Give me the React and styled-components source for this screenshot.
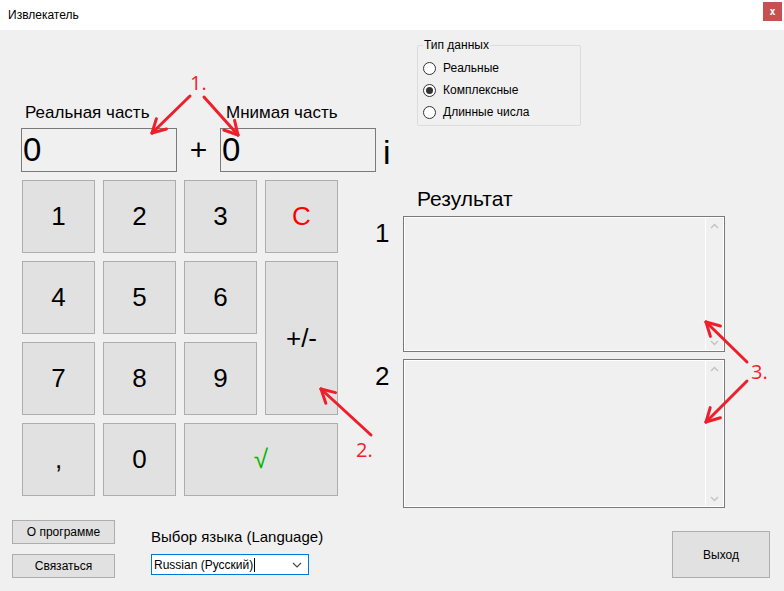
import React from "react";
import styled, { createGlobalStyle } from "styled-components";

const Global = createGlobalStyle`
  html, body { margin: 0; padding: 0; background: #f0f0f0; }
  * { box-sizing: border-box; }
`;

const Window = styled.div`
  position: relative;
  width: 784px;
  height: 591px;
  overflow: hidden;
  background: #f0f0f0;
  font-family: "Liberation Sans", Arial, sans-serif;
  color: #000;
`;

const TitleBar = styled.div`
  height: 30px;
  background: #fff;
  display: flex;
  align-items: center;
  justify-content: space-between;
  padding: 0 2px 0 8px;
  font-size: 12px;
`;

const CloseBtn = styled.div`
  width: 19px;
  height: 19px;
  margin-top: -8px;
  background: #c75050;
  color: #fff;
  font-size: 10px;
  font-weight: bold;
  display: flex;
  align-items: center;
  justify-content: center;
  font-family: "DejaVu Sans Mono", monospace;
`;

const Main = styled.div`
  display: grid;
  grid-template-columns: 370px 1fr;
  grid-template-rows: 150px 328px;
`;

const InputArea = styled.div`
  padding: 73px 0 0 21px;
  white-space: nowrap;
`;

const LabelRow = styled.div`
  display: flex;
  height: 25px;
  font-size: 17px;
  line-height: 20px;
`;

const FieldLabel = styled.div`
  flex-shrink: 0;
  width: ${(p) => p.$w || "auto"};
  padding-left: 4px;
`;

const InputRow = styled.div`
  display: flex;
  align-items: center;
  height: 44px;
`;

const NumBox = styled.div`
  flex-shrink: 0;
  width: 156px;
  height: 44px;
  border: 1px solid #7a7a7a;
  background: #f0f0f0;
  font-size: 33px;
  line-height: 42px;
  padding-left: 1px;
`;

const Plus = styled.div`
  flex-shrink: 0;
  width: 43px;
  text-align: center;
  font-size: 30px;
  line-height: 44px;
`;

const ImagI = styled.div`
  flex-shrink: 0;
  margin-left: 7px;
  font-size: 34px;
  line-height: 44px;
  padding-top: 4px;
`;

const GroupCell = styled.div`
  padding: 15px 0 0 47px;
`;

const GroupBox = styled.div`
  position: relative;
  width: 164px;
  height: 81px;
  border: 1px solid #dcdcdc;
  border-radius: 2px;
  padding: 11px 0 0 5px;
  font-size: 12px;
`;

const Legend = styled.div`
  position: absolute;
  top: -8px;
  left: 5px;
  padding: 0 1px;
  background: #f0f0f0;
  line-height: 14px;
`;

const RadioRow = styled.div`
  display: flex;
  align-items: center;
  height: 22px;
  gap: 7px;
`;

const RadioCircle = styled.span`
  width: 13px;
  height: 13px;
  border-radius: 50%;
  border: 1px solid #333;
  background: #fff;
  display: flex;
  align-items: center;
  justify-content: center;
  &::after {
    content: "";
    width: 7px;
    height: 7px;
    border-radius: 50%;
    background: ${(p) => (p.$on ? "#333" : "transparent")};
  }
`;

const Keypad = styled.div`
  padding-left: 22px;
  display: grid;
  grid-template-columns: repeat(4, 73px);
  grid-auto-rows: 73px;
  gap: 8px;
  align-content: start;
`;

const Key = styled.button`
  margin: 0;
  padding: 0;
  border: 1px solid #adadad;
  background: #e1e1e1;
  font-family: "Liberation Sans", Arial, sans-serif;
  font-size: 26px;
  color: ${(p) => p.$color || "#000"};
  grid-column: span ${(p) => p.$cols || 1};
  grid-row: span ${(p) => p.$rows || 1};
  display: flex;
  align-items: center;
  justify-content: center;
`;

const ResultCol = styled.div`
  display: flex;
  flex-direction: column;
`;

const ResultTitle = styled.div`
  margin: 7px 0 6px 47px;
  font-size: 21px;
  line-height: 23px;
`;

const ResultRow = styled.div`
  display: flex;
  align-items: flex-start;
  margin-top: ${(p) => p.$mt || 0}px;
`;

const RowNum = styled.div`
  width: 33px;
  padding: 2px 0 0 5px;
  font-size: 26px;
  line-height: 30px;
`;

const ResultBox = styled.div`
  width: 322px;
  height: ${(p) => p.$h}px;
  border: 1px solid #7a7a7a;
  box-shadow: inset 0 0 0 1px #fff;
  background: #f0f0f0;
  display: flex;
  justify-content: flex-end;
  padding: 1px;
`;

const ScrollStrip = styled.div`
  width: 18px;
  border-left: 1px solid #fff;
  display: flex;
  flex-direction: column;
  justify-content: space-between;
  align-items: center;
  padding: 5px 0 4px;
`;

const Bottom = styled.div`
  display: flex;
  align-items: flex-start;
  padding: 12px 14px 0 12px;
`;

const SmallBtnCol = styled.div`
  display: flex;
  flex-direction: column;
  gap: 10px;
`;

const SmallBtn = styled.button`
  margin: 0;
  padding: 0;
  width: ${(p) => p.$w}px;
  height: ${(p) => p.$h}px;
  border: 1px solid #adadad;
  background: #e1e1e1;
  font-family: "Liberation Sans", Arial, sans-serif;
  font-size: 12px;
  color: #000;
  margin-top: ${(p) => p.$mt || 0}px;
  margin-left: ${(p) => (p.$auto ? "auto" : "0")};
`;

const LangBlock = styled.div`
  margin-left: 36px;
  padding-top: 7px;
  display: flex;
  flex-direction: column;
  gap: 7px;
`;

const LangLabel = styled.div`
  font-size: 15px;
  line-height: 20px;
`;

const Select = styled.div`
  width: 158px;
  height: 21px;
  border: 1px solid #0078d7;
  background: #fff;
  display: flex;
  align-items: center;
  padding: 0 6px 0 2px;
  font-size: 12px;
`;

const Caret = styled.span`
  width: 1px;
  height: 14px;
  background: #000;
  margin-left: 1px;
`;

const Chevron = styled.svg`
  margin-left: auto;
`;

const Overlay = styled.svg`
  position: absolute;
  left: 0;
  top: 0;
  pointer-events: none;
`;

function Arrow({ x1, y1, x2, y2 }) {
  const a = Math.atan2(y1 - y2, x1 - x2);
  const L = 15;
  const s = 0.5;
  const h1 = [x2 + L * Math.cos(a + s), y2 + L * Math.sin(a + s)];
  const h2 = [x2 + L * Math.cos(a - s), y2 + L * Math.sin(a - s)];
  return (
    <g stroke="#ee1f2b" strokeWidth="3" strokeLinecap="round" fill="none">
      <line x1={x1} y1={y1} x2={x2} y2={y2} />
      <line x1={x2} y1={y2} x2={h1[0]} y2={h1[1]} />
      <line x1={x2} y1={y2} x2={h2[0]} y2={h2[1]} />
    </g>
  );
}

const ScrollArrow = ({ up }) => (
  <svg width="9" height="6" viewBox="0 0 9 6">
    <polyline
      points={up ? "1,5 4.5,1.5 8,5" : "1,1 4.5,4.5 8,1"}
      fill="none"
      stroke="#c2c2c2"
      strokeWidth="1.4"
    />
  </svg>
);

export default function App() {
  const keys = [
    { t: "1" }, { t: "2" }, { t: "3" }, { t: "C", c: "#ff0000" },
    { t: "4" }, { t: "5" }, { t: "6" }, { t: "+/-", r: 2 },
    { t: "7" }, { t: "8" }, { t: "9" },
    { t: "," }, { t: "0" }, { t: "√", c: "#00b400", cols: 2 },
  ];
  return (
    <Window>
      <Global />
      <TitleBar>
        <span>Извлекатель</span>
        <CloseBtn>x</CloseBtn>
      </TitleBar>
      <Main>
        <InputArea>
          <LabelRow>
            <FieldLabel $w="201px">Реальная часть</FieldLabel>
            <FieldLabel>Мнимая часть</FieldLabel>
          </LabelRow>
          <InputRow>
            <NumBox>0</NumBox>
            <Plus>+</Plus>
            <NumBox>0</NumBox>
            <ImagI>i</ImagI>
          </InputRow>
        </InputArea>
        <GroupCell>
          <GroupBox>
            <Legend>Тип данных</Legend>
            <RadioRow><RadioCircle />Реальные</RadioRow>
            <RadioRow><RadioCircle $on />Комплексные</RadioRow>
            <RadioRow><RadioCircle />Длинные числа</RadioRow>
          </GroupBox>
        </GroupCell>
        <Keypad>
          {keys.map((k, i) => (
            <Key key={i} $color={k.c} $cols={k.cols} $rows={k.r}>
              {k.t}
            </Key>
          ))}
        </Keypad>
        <ResultCol>
          <ResultTitle>Результат</ResultTitle>
          <ResultRow>
            <RowNum>1</RowNum>
            <ResultBox $h={136}>
              <ScrollStrip>
                <ScrollArrow up />
                <ScrollArrow />
              </ScrollStrip>
            </ResultBox>
          </ResultRow>
          <ResultRow $mt={7}>
            <RowNum>2</RowNum>
            <ResultBox $h={149}>
              <ScrollStrip>
                <ScrollArrow up />
                <ScrollArrow />
              </ScrollStrip>
            </ResultBox>
          </ResultRow>
        </ResultCol>
      </Main>
      <Bottom>
        <SmallBtnCol>
          <SmallBtn $w={103} $h={24}>О программе</SmallBtn>
          <SmallBtn $w={103} $h={24}>Связаться</SmallBtn>
        </SmallBtnCol>
        <LangBlock>
          <LangLabel>Выбор языка (Language)</LangLabel>
          <Select>
            <span>Russian (Русский)</span>
            <Caret />
            <Chevron width="10" height="6" viewBox="0 0 10 6">
              <polyline points="1,1 5,5 9,1" fill="none" stroke="#444" strokeWidth="1.1" />
            </Chevron>
          </Select>
        </LangBlock>
        <SmallBtn $w={98} $h={47} $mt={11} $auto>Выход</SmallBtn>
      </Bottom>
      <Overlay width="784" height="591" viewBox="0 0 784 591">
        <g fill="#ee1f2b" fontFamily="'Open Sans', 'Noto Sans', sans-serif" fontSize="20">
          <text x="190" y="90">1.</text>
          <text x="356" y="457">2.</text>
          <text x="751" y="379">3.</text>
        </g>
        <Arrow x1={190} y1={96} x2={152} y2={133} />
        <Arrow x1={204} y1={97} x2={238} y2={135} />
        <Arrow x1={371} y1={435} x2={321} y2={389} />
        <Arrow x1={747} y1={362} x2={706} y2={322} />
        <Arrow x1={747} y1={381} x2={706} y2={422} />
      </Overlay>
    </Window>
  );
}
